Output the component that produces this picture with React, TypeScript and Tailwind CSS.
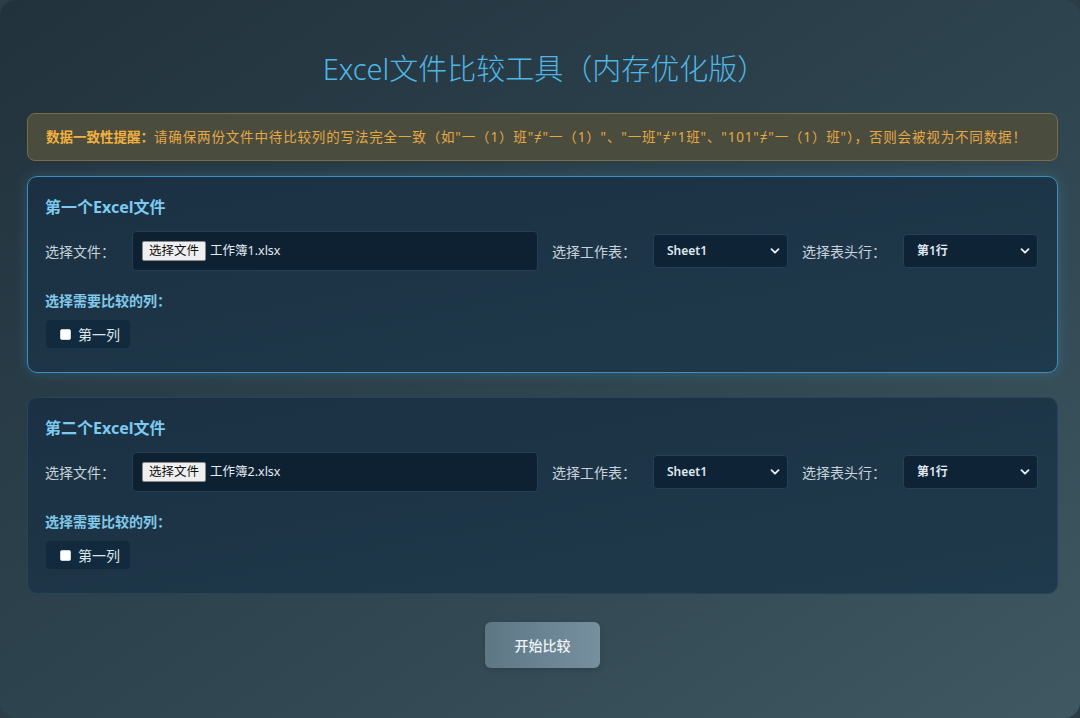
import React from "react";

const FONT = { fontFamily: '"Noto Sans", "Noto Sans CJK SC", sans-serif' } as const;

function Chevron() {
  return (
    <svg width="10" height="10" viewBox="0 0 10 10" className="shrink-0">
      <path d="M1.5 3.2 L5 6.7 L8.5 3.2" stroke="#e6edf2" strokeWidth="1.9" fill="none" strokeLinecap="round" strokeLinejoin="round" />
    </svg>
  );
}

function FakeSelect({ value }: { value: string }) {
  return (
    <div className="w-[135px] h-[34px] flex items-center justify-between pl-[13px] pr-[7px] bg-[#0f2337] border border-[#24415a] rounded-[4px]">
      <span className="text-[12px] font-semibold text-[#dfe8ee]">{value}</span>
      <Chevron />
    </div>
  );
}

function Card({ title, file, active }: { title: string; file: string; active?: boolean }) {
  return (
    <div
      className={
        "rounded-[10px] border bg-gradient-to-br from-[#1b3043] to-[#1f3a4c] pl-[17px] pr-[19px] pt-[18px] pb-[24px] " +
        (active
          ? "border-[#3f8fbd] shadow-[0_0_14px_rgba(70,160,210,0.28)]"
          : "border-[#274559]")
      }
    >
      <div className="text-[16px] font-bold text-[#7ccaf0] leading-[24px]">{title}</div>
      <div className="flex items-center mt-[12px]">
        <div className="w-[87px] text-[14px] text-[#c7d2da]">选择文件：</div>
        <div className="flex-1 h-[40px] flex items-center pl-[9px] bg-[#0e2133] border border-[#253f55] rounded-[4px]">
          <span className="h-[20px] px-[6px] flex items-center bg-[#efefef] border border-[#8a8a8a] rounded-[2px] text-[12.5px] text-[#111]">
            选择文件
          </span>
          <span className="ml-[4px] text-[12.5px] text-[#e4ecf1]">{file}</span>
        </div>
        <div className="w-[101px] ml-[14px] text-[14px] text-[#c7d2da]">选择工作表：</div>
        <FakeSelect value="Sheet1" />
        <div className="w-[101px] ml-[14px] text-[14px] text-[#c7d2da]">选择表头行：</div>
        <FakeSelect value="第1行" />
      </div>
      <div className="mt-[19px] text-[14px] font-bold text-[#80c8e8] leading-[22px]">选择需要比较的列：</div>
      <div className="mt-[8px] ml-[1px] inline-flex items-center h-[28px] pl-[14px] pr-[10px] bg-[#122a3d] rounded-[4px]">
        <span className="w-[11px] h-[11px] bg-white rounded-[2px] border border-[#cfd6db]" />
        <span className="ml-[7px] text-[14px] text-[#dbe4ea]">第一列</span>
      </div>
    </div>
  );
}

export default function App() {
  return (
    <div style={FONT} className="w-[1080px] h-[718px] overflow-hidden bg-[#2b3e48]">
      <div className="w-full h-full rounded-[16px] bg-gradient-to-br from-[#22323c] via-[#2d434e] to-[#3f5862] pl-[27px] pr-[22px] pt-[47px] flex flex-col">
        <h1 className="text-center text-[29px] font-light text-[#4fb6e6] leading-[44px] pl-[4px]">
          Excel文件比较工具（内存优化版）
        </h1>
        <div className="mt-[22px] h-[48px] flex items-center px-[18px] rounded-[8px] border border-[#7c6c46] bg-[#4a4c3e] text-[13.5px] text-[#e6a843] whitespace-nowrap">
          <span className="font-bold text-[#f2b13f]">数据一致性提醒：</span>
          <span className="tracking-[0.85px]">请确保两份文件中待比较列的写法完全一致（如"一（1）班"≠"一（1）"、"一班"≠"1班"、"101"≠"一（1）班"），否则会被视为不同数据！</span>
        </div>
        <div className="mt-[15px]">
          <Card title="第一个Excel文件" file="工作簿1.xlsx" active />
        </div>
        <div className="mt-[24px]">
          <Card title="第二个Excel文件" file="工作簿2.xlsx" />
        </div>
        <div className="flex justify-center mt-[28px]">
          <button className="w-[115px] h-[46px] rounded-[6px] bg-gradient-to-r from-[#5d7785] to-[#7790a0] text-[14px] font-medium text-[#eef3f6] shadow-[0_2px_6px_rgba(0,0,0,0.15)]">
            开始比较
          </button>
        </div>
      </div>
    </div>
  );
}
